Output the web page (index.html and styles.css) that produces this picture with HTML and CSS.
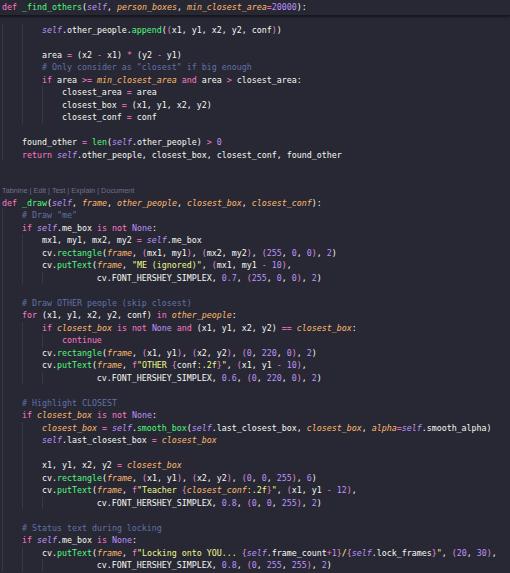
FILE: index.html
```html
<!DOCTYPE html>
<html>
<head>
<meta charset="utf-8">
<link rel="stylesheet" href="styles.css">
</head>
<body>
<div class="editor">
  <div class="sticky"><span class="k">def</span> <span class="fn">_find_others</span>(<span class="se">self</span>, <span class="pa">person_boxes</span>, <span class="pa">min_closest_area</span><span class="op">=</span><span class="nu">20000</span>):</div>
  <div class="code">
    <div class="ln"><i class="g"></i><i class="g"></i><span class="se">self</span>.other_people.<span class="fn">append</span>(<span class="b2">(</span>x1, y1, x2, y2, conf<span class="b2">)</span>)</div>
    <div class="ln"><i class="g"></i><i class="g"></i></div>
    <div class="ln"><i class="g"></i><i class="g"></i>area <span class="op">=</span> (x2 <span class="op">-</span> x1) <span class="op">*</span> (y2 <span class="op">-</span> y1)</div>
    <div class="ln"><i class="g"></i><i class="g"></i><span class="cm"># Only consider as "closest" if big enough</span></div>
    <div class="ln"><i class="g"></i><i class="g"></i><span class="k">if</span> area <span class="op">&gt;=</span> <span class="pa">min_closest_area</span> <span class="k">and</span> area <span class="op">&gt;</span> closest_area:</div>
    <div class="ln"><i class="g"></i><i class="g"></i><i class="g"></i>closest_area <span class="op">=</span> area</div>
    <div class="ln"><i class="g"></i><i class="g"></i><i class="g"></i>closest_box <span class="op">=</span> (x1, y1, x2, y2)</div>
    <div class="ln"><i class="g"></i><i class="g"></i><i class="g"></i>closest_conf <span class="op">=</span> conf</div>
    <div class="ln"><i class="g"></i></div>
    <div class="ln"><i class="g"></i>found_other <span class="op">=</span> <span class="fn">len</span>(<span class="se">self</span>.other_people) <span class="op">&gt;</span> <span class="nu">0</span></div>
    <div class="ln"><i class="g"></i><span class="k">return</span> <span class="se">self</span>.other_people, closest_box, closest_conf, found_other</div>
    <div class="ln"></div>
    <div class="ln"></div>
    <div class="lens">Tabnine | Edit | Test | Explain | Document</div>
    <div class="ln"><span class="k">def</span> <span class="fn">_draw</span>(<span class="se">self</span>, <span class="pa">frame</span>, <span class="pa">other_people</span>, <span class="pa">closest_box</span>, <span class="pa">closest_conf</span>):</div>
    <div class="ln"><i class="g"></i><span class="cm"># Draw "me"</span></div>
    <div class="ln"><i class="g"></i><span class="k">if</span> <span class="se">self</span>.me_box <span class="k">is not</span> <span class="nu">None</span>:</div>
    <div class="ln"><i class="g"></i><i class="g"></i>mx1, my1, mx2, my2 <span class="op">=</span> <span class="se">self</span>.me_box</div>
    <div class="ln"><i class="g"></i><i class="g"></i>cv.<span class="fn">rectangle</span>(<span class="pa">frame</span>, <span class="b2">(</span>mx1, my1<span class="b2">)</span>, <span class="b2">(</span>mx2, my2<span class="b2">)</span>, <span class="b2">(</span><span class="nu">255</span>, <span class="nu">0</span>, <span class="nu">0</span><span class="b2">)</span>, <span class="nu">2</span>)</div>
    <div class="ln"><i class="g"></i><i class="g"></i>cv.<span class="fn">putText</span>(<span class="pa">frame</span>, <span class="st">"ME (ignored)"</span>, <span class="b2">(</span>mx1, my1 <span class="op">-</span> <span class="nu">10</span><span class="b2">)</span>,</div>
    <div class="ln"><i class="g"></i><i class="g"></i><i class="g"></i>       cv.FONT_HERSHEY_SIMPLEX, <span class="nu">0.7</span>, <span class="b2">(</span><span class="nu">255</span>, <span class="nu">0</span>, <span class="nu">0</span><span class="b2">)</span>, <span class="nu">2</span>)</div>
    <div class="ln"><i class="g"></i></div>
    <div class="ln"><i class="g"></i><span class="cm"># Draw OTHER people (skip closest)</span></div>
    <div class="ln"><i class="g"></i><span class="k">for</span> (x1, y1, x2, y2, conf) <span class="k">in</span> <span class="pa">other_people</span>:</div>
    <div class="ln"><i class="g"></i><i class="g"></i><span class="k">if</span> <span class="pa">closest_box</span> <span class="k">is not</span> <span class="nu">None</span> <span class="k">and</span> (x1, y1, x2, y2) <span class="op">==</span> <span class="pa">closest_box</span>:</div>
    <div class="ln"><i class="g"></i><i class="g"></i><i class="g"></i><span class="k">continue</span></div>
    <div class="ln"><i class="g"></i><i class="g"></i>cv.<span class="fn">rectangle</span>(<span class="pa">frame</span>, <span class="b2">(</span>x1, y1<span class="b2">)</span>, <span class="b2">(</span>x2, y2<span class="b2">)</span>, <span class="b2">(</span><span class="nu">0</span>, <span class="nu">220</span>, <span class="nu">0</span><span class="b2">)</span>, <span class="nu">2</span>)</div>
    <div class="ln"><i class="g"></i><i class="g"></i>cv.<span class="fn">putText</span>(<span class="pa">frame</span>, <span class="k">f</span><span class="st">"OTHER </span><span class="b2">{</span>conf<span class="st">:.2f</span><span class="b2">}</span><span class="st">"</span>, <span class="b2">(</span>x1, y1 <span class="op">-</span> <span class="nu">10</span><span class="b2">)</span>,</div>
    <div class="ln"><i class="g"></i><i class="g"></i><i class="g"></i>       cv.FONT_HERSHEY_SIMPLEX, <span class="nu">0.6</span>, <span class="b2">(</span><span class="nu">0</span>, <span class="nu">220</span>, <span class="nu">0</span><span class="b2">)</span>, <span class="nu">2</span>)</div>
    <div class="ln"><i class="g"></i></div>
    <div class="ln"><i class="g"></i><span class="cm"># Highlight CLOSEST</span></div>
    <div class="ln"><i class="g"></i><span class="k">if</span> <span class="pa">closest_box</span> <span class="k">is not</span> <span class="nu">None</span>:</div>
    <div class="ln"><i class="g"></i><i class="g"></i><span class="pa">closest_box</span> <span class="op">=</span> <span class="se">self</span>.<span class="fn">smooth_box</span>(<span class="se">self</span>.last_closest_box, <span class="pa">closest_box</span>, <span class="pa">alpha</span><span class="op">=</span><span class="se">self</span>.smooth_alpha)</div>
    <div class="ln"><i class="g"></i><i class="g"></i><span class="se">self</span>.last_closest_box <span class="op">=</span> <span class="pa">closest_box</span></div>
    <div class="ln"><i class="g"></i><i class="g"></i></div>
    <div class="ln"><i class="g"></i><i class="g"></i>x1, y1, x2, y2 <span class="op">=</span> <span class="pa">closest_box</span></div>
    <div class="ln"><i class="g"></i><i class="g"></i>cv.<span class="fn">rectangle</span>(<span class="pa">frame</span>, <span class="b2">(</span>x1, y1<span class="b2">)</span>, <span class="b2">(</span>x2, y2<span class="b2">)</span>, <span class="b2">(</span><span class="nu">0</span>, <span class="nu">0</span>, <span class="nu">255</span><span class="b2">)</span>, <span class="nu">6</span>)</div>
    <div class="ln"><i class="g"></i><i class="g"></i>cv.<span class="fn">putText</span>(<span class="pa">frame</span>, <span class="k">f</span><span class="st">"Teacher </span><span class="b2">{</span><span class="pa">closest_conf</span><span class="st">:.2f</span><span class="b2">}</span><span class="st">"</span>, <span class="b2">(</span>x1, y1 <span class="op">-</span> <span class="nu">12</span><span class="b2">)</span>,</div>
    <div class="ln"><i class="g"></i><i class="g"></i><i class="g"></i>       cv.FONT_HERSHEY_SIMPLEX, <span class="nu">0.8</span>, <span class="b2">(</span><span class="nu">0</span>, <span class="nu">0</span>, <span class="nu">255</span><span class="b2">)</span>, <span class="nu">2</span>)</div>
    <div class="ln"><i class="g"></i></div>
    <div class="ln"><i class="g"></i><span class="cm"># Status text during locking</span></div>
    <div class="ln"><i class="g"></i><span class="k">if</span> <span class="se">self</span>.me_box <span class="k">is</span> <span class="nu">None</span>:</div>
    <div class="ln"><i class="g"></i><i class="g"></i>cv.<span class="fn">putText</span>(<span class="pa">frame</span>, <span class="k">f</span><span class="st">"Locking onto YOU... </span><span class="b2">{</span><span class="se">self</span>.frame_count<span class="op">+</span><span class="nu">1</span><span class="b2">}</span><span class="st">/</span><span class="b2">{</span><span class="se">self</span>.lock_frames<span class="b2">}</span><span class="st">"</span>, <span class="b2">(</span><span class="nu">20</span>, <span class="nu">30</span><span class="b2">)</span>,</div>
    <div class="ln"><i class="g"></i><i class="g"></i><i class="g"></i>       cv.FONT_HERSHEY_SIMPLEX, <span class="nu">0.8</span>, <span class="b2">(</span><span class="nu">0</span>, <span class="nu">255</span>, <span class="nu">255</span><span class="b2">)</span>, <span class="nu">2</span>)</div>
  </div>
</div>
</body>
</html>
```

FILE: styles.css
```css
html, body {
  margin: 0;
  padding: 0;
  background: #272834;
}
.editor {
  width: 510px;
  height: 573px;
  overflow: hidden;
  background: #272834;
  font-family: "DejaVu Sans Mono", monospace;
  font-size: 8.3px;
  color: #f8f8f2;
}
.sticky {
  height: 15px;
  line-height: 15px;
  padding-left: 2px;
  white-space: pre;
  border-bottom: 1px solid #17181f;
  box-shadow: 0 1px 2px rgba(0, 0, 0, 0.5);
  position: relative;
  z-index: 1;
}
.code {
  padding-top: 7.75px;
}
.ln {
  height: 12.5px;
  line-height: 12.5px;
  padding-left: 2px;
  white-space: pre;
}
.g {
  display: inline-block;
  width: 4ch;
  height: 12.5px;
  vertical-align: top;
  box-shadow: inset 1px 0 0 #363848;
  font-style: normal;
}
.lens {
  height: 10.5px;
  line-height: 10.5px;
  padding-left: 2px;
  font-family: "Liberation Sans", sans-serif;
  font-size: 7.3px;
  color: #6e7189;
  white-space: pre;
}
.k { color: #ff79c6; }
.op { color: #ff79c6; }
.fn { color: #50fa7b; }
.se { color: #bd93f9; font-style: italic; }
.pa { color: #ffb86c; font-style: italic; }
.nu { color: #bd93f9; }
.st { color: #f1fa8c; }
.cm { color: #6272a4; }
.b2 { color: #e78fd0; }
```
